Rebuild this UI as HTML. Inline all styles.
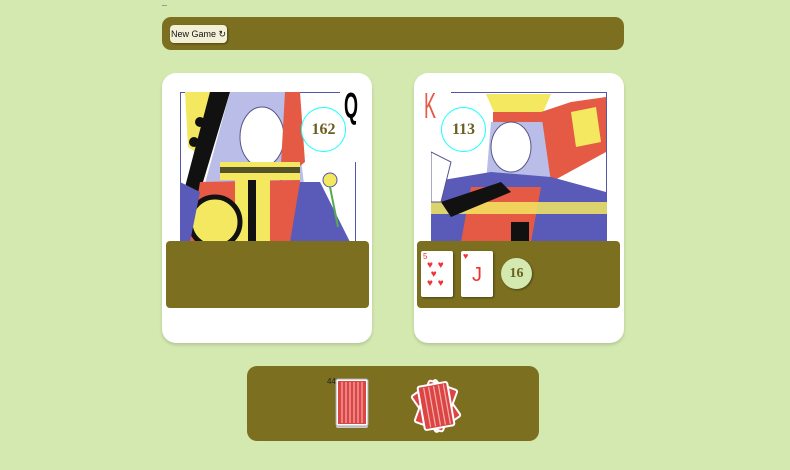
<!DOCTYPE html>
<html><head><style>
body{margin:0;width:790px;height:470px;background:#d3e9b0;font-family:"Liberation Sans",sans-serif;position:relative;overflow:hidden}
.abs{position:absolute}
.bar{left:162px;top:17px;width:462px;height:33px;background:#7c7020;border-radius:9px}
.btn{left:170px;top:25px;width:57px;height:18px;background:#f4f0d8;border-radius:4px;font-size:9px;line-height:18px;text-align:center;box-shadow:1px 1px 2px rgba(0,0,0,.4);color:#111}
.panel{background:#fff;border-radius:14px;width:210px;height:270px;top:73px;box-shadow:0 2px 3px rgba(0,0,0,.15)}
.tray{background:#7c7020;border-radius:4px}
.circ{border-radius:50%;border:1px solid #2ff;text-align:center;font-family:"Liberation Serif",serif;font-weight:bold;color:#6a5f20;font-size:16px;background:#fff}
.card{background:#fff;border-radius:2px;box-shadow:1px 1px 2px rgba(0,0,0,.4)}
</style></head><body>
<div class="abs" style="left:162px;top:5px;width:5px;height:1px;background:#999"></div>
<div class="abs bar"></div>
<div class="abs btn">New Game ↻</div>

<div class="abs panel" style="left:162px"></div>
<svg class="abs" style="left:180px;top:92px" width="176" height="150">
<rect width="176" height="150" fill="#fff"/>
<line x1="0" y1="0.5" x2="160" y2="0.5" stroke="#55a"/>
<line x1="0.5" y1="0" x2="0.5" y2="150" stroke="#55a"/>
<polygon points="5,0 30,0 40,30 15,60 8,55" fill="#f3e860"/>
<circle cx="20" cy="30" r="5" fill="#111"/><circle cx="14" cy="50" r="5" fill="#111"/>
<polygon points="30,0 50,0 20,100 5,95" fill="#111"/>
<polygon points="50,0 110,0 120,60 125,100 60,100 20,110" fill="#b9bde8"/>
<ellipse cx="82" cy="45" rx="22" ry="30" fill="#fff" stroke="#558" stroke-width="1"/>
<polygon points="105,0 120,0 125,70 100,90" fill="#e55a45"/>
<rect x="40" y="70" width="80" height="18" fill="#f3e860"/>
<rect x="40" y="75" width="80" height="6" fill="#111" opacity=".7"/>
<polygon points="20,90 120,88 118,150 10,150" fill="#e55a45"/>
<rect x="55" y="88" width="35" height="62" fill="#f3e860"/>
<rect x="68" y="88" width="8" height="62" fill="#111"/>
<circle cx="35" cy="130" r="25" fill="#f3e860" stroke="#111" stroke-width="5"/>
<polygon points="0,90 20,100 10,150 0,150" fill="#5a5ab8"/>
<polygon points="120,90 140,90 170,150 110,150" fill="#5a5ab8"/>
<circle cx="150" cy="88" r="7" fill="#f3e860" stroke="#55a"/>
<path d="M150 95 L158 135" stroke="#5a5" stroke-width="2"/>
<line x1="175.5" y1="70" x2="175.5" y2="150" stroke="#55a"/>
</svg>
<div class="abs" style="left:344px;top:86px;font-size:36px;font-family:'Liberation Sans';font-weight:bold;transform:scaleX(.5);transform-origin:left;background:#fff;line-height:40px;padding-right:6px">Q</div>
<div class="abs circ" style="left:301px;top:107px;width:43px;height:43px;line-height:43px">162</div>
<div class="abs tray" style="left:166px;top:241px;width:203px;height:67px"></div>

<div class="abs panel" style="left:414px"></div>
<svg class="abs" style="left:431px;top:92px" width="176" height="150">
<rect width="176" height="150" fill="#fff"/>
<line x1="20" y1="0.5" x2="176" y2="0.5" stroke="#55a"/>
<line x1="175.5" y1="0" x2="175.5" y2="150" stroke="#55a"/>
<polygon points="55,2 120,2 110,25 65,25" fill="#f3e860"/>
<rect x="62" y="20" width="52" height="10" fill="#e55a45"/>
<polygon points="60,30 115,30 120,90 55,90" fill="#b9bde8"/>
<ellipse cx="80" cy="55" rx="20" ry="25" fill="#fff" stroke="#558"/>
<polygon points="110,20 140,10 175,5 175,60 120,90" fill="#e55a45"/>
<polygon points="140,20 165,15 170,50 145,55" fill="#f3e860"/>
<polygon points="0,90 60,80 120,85 175,100 176,150 0,150" fill="#5a5ab8"/>
<polygon points="40,95 110,95 100,150 30,150" fill="#e55a45"/>
<rect x="0" y="110" width="176" height="12" fill="#f3e860" opacity=".85"/>
<polygon points="10,110 70,90 80,100 20,125" fill="#111"/>
<rect x="80" y="130" width="18" height="20" fill="#111"/>
<polygon points="0,60 20,70 10,110 0,110" fill="#fff" stroke="#558"/>
</svg>
<div class="abs" style="left:424px;top:86px;font-size:36px;color:#e55a45;transform:scaleX(.5);transform-origin:left;line-height:40px">K</div>
<div class="abs circ" style="left:441px;top:107px;width:43px;height:43px;line-height:43px">113</div>
<div class="abs tray" style="left:417px;top:241px;width:203px;height:67px"></div>
<div class="abs card" style="left:421px;top:251px;width:32px;height:46px">
<div style="color:#e33;font-size:8px;position:absolute;left:2px;top:1px">5</div>
<div style="color:#e33;font-size:10px;position:absolute;left:6px;top:10px;line-height:9px;letter-spacing:1px">♥&nbsp;♥<br>&nbsp;♥<br>♥&nbsp;♥</div></div>
<div class="abs card" style="left:461px;top:251px;width:32px;height:46px">
<div style="color:#e33;font-size:9px;position:absolute;left:2px;top:0">♥</div>
<div style="color:#e33;font-size:20px;position:absolute;left:11px;top:13px;font-family:'Liberation Sans Narrow','Liberation Sans'">J</div></div>
<div class="abs circ" style="left:501px;top:258px;width:31px;height:31px;line-height:31px;border:none;background:#d3e9b0;box-shadow:1px 1px 2px rgba(0,0,0,.4);font-size:14px">16</div>

<div class="abs tray" style="left:247px;top:366px;width:292px;height:75px;border-radius:10px"></div>
<div class="abs" style="left:327px;top:377px;font-size:8px;color:#222">44</div>
<svg class="abs" style="left:335px;top:378px" width="36" height="52">
<rect x="1" y="3" width="32" height="47" rx="2" fill="#ccc"/>
<rect x="1" y="1" width="32" height="47" rx="2" fill="#fff" stroke="#aaa"/>
<rect x="3" y="3" width="28" height="43" fill="#d44"/>
<g stroke="#f3b0b0" stroke-width="1.2"><line x1="7" y1="4" x2="7" y2="45"/><line x1="11" y1="4" x2="11" y2="45"/><line x1="15" y1="4" x2="15" y2="45"/><line x1="19" y1="4" x2="19" y2="45"/><line x1="23" y1="4" x2="23" y2="45"/><line x1="27" y1="4" x2="27" y2="45"/></g>
</svg>
<svg class="abs" style="left:405px;top:374px" width="62" height="64">
<g transform="translate(31,32)">
<g transform="rotate(-35)"><rect x="-15" y="-22" width="30" height="44" rx="2" fill="#d44" stroke="#fff" stroke-width="2"/></g>
<g transform="rotate(20)"><rect x="-15" y="-22" width="30" height="44" rx="2" fill="#d44" stroke="#fff" stroke-width="2"/></g>
<g transform="rotate(-10)"><rect x="-15" y="-22" width="30" height="44" rx="2" fill="#d44" stroke="#fff" stroke-width="2"/>
<g stroke="#f3b0b0" stroke-width="1.2"><line x1="-9" y1="-20" x2="-9" y2="20"/><line x1="-4" y1="-20" x2="-4" y2="20"/><line x1="1" y1="-20" x2="1" y2="20"/><line x1="6" y1="-20" x2="6" y2="20"/><line x1="11" y1="-20" x2="11" y2="20"/></g></g>
</g></svg>
</body></html>
